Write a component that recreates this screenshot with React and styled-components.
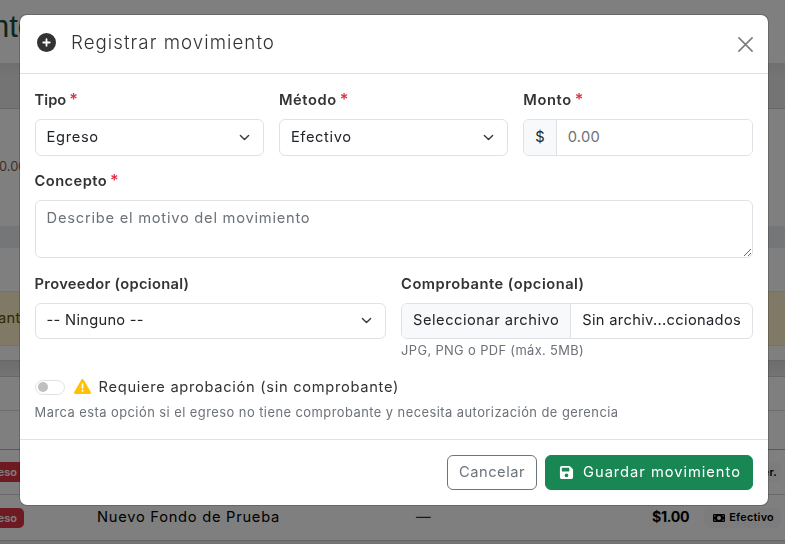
import React from 'react';
import styled, { createGlobalStyle } from 'styled-components';
import { FaCirclePlus, FaTriangleExclamation, FaFloppyDisk, FaMoneyBill } from 'react-icons/fa6';

const GlobalStyle = createGlobalStyle`
  * { box-sizing: border-box; }
  body {
    margin: 0;
    overflow: hidden;
    font-family: Inter, "Open Sans", sans-serif;
    font-size: 14.7px;
    font-weight: 370;
    line-height: 22.5px;
    color: #333;
  }
  input, select, textarea, button { font: inherit; color: inherit; }
`;

/* ---------- page behind the dialog ---------- */

const Page = styled.div`
  height: 544px;
  overflow: hidden;
  display: flex;
  flex-direction: column;
  background: #e8e8e8;
`;

const Band = styled.div`
  flex: none;
  display: flex;
  align-items: center;
  height: ${(p) => p.$height}px;
  background: ${(p) => p.$bg || '#fff'};
  border-bottom: ${(p) => (p.$line ? `1px solid ${p.$line}` : '0')};
  color: ${(p) => p.$color || '#333'};
  white-space: nowrap;
`;

const PageTitle = styled.div`
  margin: -10px 0 0 -8px;
  font: 31px/36px "Liberation Sans", Arial, sans-serif;
  color: #1b5034;
`;

const Amount = styled.div`
  margin: 0 0 0 -1px;
  font-size: 12.9px;
  color: #8a5a3c;
`;

const AlertText = styled.span`
  margin-left: -2px;
  letter-spacing: 0.3px;
  color: #664d03;
`;

const TypeCell = styled.div`
  width: 97px;
  margin-left: -26px;
  padding-right: 47px;
  display: flex;
  flex: none;
`;

const TypeBadge = styled.span`
  width: 50px;
  height: 20px;
  padding-right: 7px;
  border-radius: 5px;
  background: #dc3545;
  color: #fff;
  font-size: 11px;
  font-weight: 600;
  line-height: 20px;
  text-align: right;
`;

const ConceptCell = styled.div`
  width: 319px;
  margin-left: 26px;
  flex: none;
  letter-spacing: 0.73px;
  color: #000;
`;

const VoucherCell = styled.div`
  width: 236px;
  flex: none;
`;

const PriceCell = styled.div`
  width: 52px;
  flex: none;
  font-size: 14.2px;
  font-weight: 650;
  letter-spacing: -0.3px;
  color: #000;
`;

const MethodBadge = styled.span`
  display: inline-flex;
  align-items: center;
  justify-content: flex-end;
  gap: 4px;
  width: 77px;
  height: 20px;
  padding-right: ${(p) => (p.$wide ? 4 : 7)}px;
  border-radius: 5px;
  background: #f8f9fa;
  color: #000;
  font-size: 10.9px;
  font-weight: 600;
  letter-spacing: 0.25px;

  svg { width: 12px; height: 12px; }
`;

/* ---------- dialog ---------- */

const Backdrop = styled.div`
  position: fixed;
  inset: 0;
  display: flex;
  align-items: flex-start;
  padding: 14px 0 0 19px;
  background: rgba(0, 0, 0, 0.5);
`;

const Dialog = styled.section`
  width: 750px;
  height: 492px;
  display: flex;
  flex-direction: column;
  overflow: hidden;
  border: 1px solid rgba(0, 0, 0, 0.18);
  border-radius: 8px;
  background: #fff;
  background-clip: padding-box;
`;

const Header = styled.header`
  flex: none;
  height: 59px;
  display: flex;
  align-items: center;
  gap: 15px;
  padding: 0 15px 1px 17px;
  border-bottom: 1px solid #dee2e6;

  > svg { width: 19px; height: 19px; margin-top: -2px; }
`;

const Title = styled.h5`
  flex: 1;
  margin: -2px 0 0;
  font-size: 18.7px;
  font-weight: 360;
  line-height: 28px;
  letter-spacing: 1.05px;
`;

const CloseButton = styled.button`
  display: flex;
  margin-top: 2px;
  padding: 0;
  border: 0;
  background: none;
  color: #000;
  opacity: 0.5;
`;

const Body = styled.div`
  flex: 1;
  display: flex;
  flex-direction: column;
  padding: 15px 15.4px 0 14.6px;
`;

const Row = styled.div`
  display: grid;
  grid-template-columns: repeat(${(p) => p.$cols}, 1fr);
  gap: 15px;
  margin-bottom: 14.5px;
`;

const Field = styled.div`
  display: flex;
  flex-direction: column;
  min-width: 0;
`;

const Label = styled.label`
  margin-bottom: 7.5px;
  font-weight: 600;
  letter-spacing: ${(p) => p.$track}px;
  white-space: pre;
`;

const Required = styled.span`
  margin-left: 3px;
  font-size: 16px;
  line-height: 1;
  color: #dc3545;
`;

const SelectBox = styled.div`
  display: grid;
  align-items: center;

  > * { grid-area: 1 / 1; }
  > svg { justify-self: end; margin-right: 14px; pointer-events: none; }
`;

const Select = styled.select`
  appearance: none;
  width: 100%;
  height: 36.5px;
  padding: 0 34px 1px 11px;
  border: 1px solid #dee2e6;
  border-radius: 6px;
  background: #fff;
  color: #212529;
  letter-spacing: ${(p) => p.$track}px;
`;

const InputGroup = styled.div`
  display: flex;
  height: 36.5px;
  overflow: hidden;
  border: 1px solid #dee2e6;
  border-radius: 6px;
`;

const Addon = styled.span`
  flex: none;
  display: flex;
  align-items: center;
  padding: 0 11px 1px;
  border-right: 1px solid #dee2e6;
  background: #f8f9fa;
  color: #212529;
  letter-spacing: ${(p) => p.$track || 0}px;
`;

const AmountInput = styled.input`
  flex: 1;
  min-width: 0;
  padding: 0 11px 1px;
  border: 0;
  outline: 0;
  letter-spacing: 0.25px;

  &::placeholder { color: #6c7278; opacity: 1; }
`;

const FileName = styled.span`
  flex: 1;
  display: flex;
  align-items: center;
  padding: 0 11px 1px;
  letter-spacing: 0.32px;
  color: #212529;
  white-space: nowrap;
`;

const TextArea = styled.textarea`
  display: block;
  width: 100%;
  height: 58px;
  padding: 5.5px 11px;
  border: 1px solid #dee2e6;
  border-radius: 6px;
  background: #fff;
  letter-spacing: 0.75px;
  resize: vertical;

  &::placeholder { color: #6c7278; opacity: 1; }
`;

const Hint = styled.div`
  margin-top: ${(p) => p.$gap}px;
  font-size: 12.9px;
  line-height: 19.7px;
  letter-spacing: ${(p) => p.$track}px;
  color: #6c7278;
  white-space: nowrap;
`;

const SwitchRow = styled.label`
  display: flex;
  align-items: center;
  height: 22.5px;
  margin-top: 1.5px;
  letter-spacing: 0.69px;

  > svg { width: 17px; height: 17px; margin: -1px 8px 0 9px; color: #ffc107; }
`;

const Switch = styled.span`
  width: 30px;
  height: 15px;
  padding: 1.5px 2px;
  border: 1px solid #dee2e6;
  border-radius: 15px;

  &::before {
    content: '';
    display: block;
    width: 10px;
    height: 10px;
    border-radius: 50%;
    background: #bfbfbf;
  }
`;

const Footer = styled.footer`
  flex: none;
  height: 66px;
  display: flex;
  justify-content: flex-end;
  align-items: flex-start;
  gap: 8px;
  padding: 15px;
  border-top: 1px solid #dee2e6;
`;

const Button = styled.button`
  height: 35px;
  display: flex;
  align-items: center;
  justify-content: center;
  gap: 9px;
  width: ${(p) => (p.$primary ? 208 : 90)}px;
  padding: 0 0 1px;
  border: 1px solid ${(p) => (p.$primary ? '#198754' : '#6c757d')};
  border-radius: 6px;
  background: ${(p) => (p.$primary ? '#198754' : '#fff')};
  color: ${(p) => (p.$primary ? '#fff' : '#6c757d')};
  font-weight: ${(p) => (p.$primary ? 400 : 370)};
  letter-spacing: ${(p) => (p.$primary ? 0.97 : 0.53)}px;
  white-space: nowrap;

  svg { width: 15px; height: 15px; margin-left: 2px; }
`;

const Chevron = () => (
  <svg width="11" height="11" viewBox="0 0 16 16" fill="none">
    <path d="m2 5 6 6 6-6" stroke="#343a40" strokeWidth="2" strokeLinecap="round" strokeLinejoin="round" />
  </svg>
);

const Dropdown = ({ value, track }) => (
  <SelectBox>
    <Select $track={track} defaultValue={value}>
      <option>{value}</option>
    </Select>
    <Chevron />
  </SelectBox>
);

const Background = () => (
  <Page>
    <Band $height={63}><PageTitle>nto</PageTitle></Band>
    <Band $height={46} $bg="linear-gradient(#dedede, #e8e8e8 12px)" $line="#d0d0d0" />
    <Band $height={117}><Amount>0.00</Amount></Band>
    <Band $height={22} $bg="#e9ecef" />
    <Band $height={44} $line="#ffe69c" />
    <Band $height={54} $bg="#fff3cd" $line="#ffe69c"><AlertText>ant</AlertText></Band>
    <Band $height={15} $line="#cfcfcf" />
    <Band $height={16} $bg="linear-gradient(#dadada, #e8e8e8)" $line="#d0d0d0" />
    <Band $height={34} $line="#dcdcdc" />
    <Band $height={39} $line="#b4b4b4" />
    <Band $height={45} $line="#d4d4d4">
      <TypeCell><TypeBadge>eso</TypeBadge></TypeCell>
      <ConceptCell />
      <VoucherCell />
      <PriceCell />
      <MethodBadge $wide>er.</MethodBadge>
    </Band>
    <Band $height={46} $line="#c8c8c8">
      <TypeCell><TypeBadge>eso</TypeBadge></TypeCell>
      <ConceptCell>Nuevo Fondo de Prueba</ConceptCell>
      <VoucherCell>—</VoucherCell>
      <PriceCell>$1.00</PriceCell>
      <MethodBadge><FaMoneyBill />Efectivo</MethodBadge>
    </Band>
  </Page>
);

export default function App() {
  return (
    <>
      <GlobalStyle />
      <Background />
      <Backdrop>
        <Dialog role="dialog">
          <Header>
            <FaCirclePlus />
            <Title>Registrar movimiento</Title>
            <CloseButton aria-label="Cerrar">
              <svg width="15" height="15" viewBox="0 0 16 16" fill="none">
                <path d="M1 1l14 14M15 1L1 15" stroke="currentColor" strokeWidth="1.8" strokeLinecap="round" />
              </svg>
            </CloseButton>
          </Header>

          <Body>
            <Row $cols={3}>
              <Field>
                <Label $track={0}>Tipo<Required>*</Required></Label>
                <Dropdown value="Egreso" track={0.66} />
              </Field>
              <Field>
                <Label $track={0.6}>Método<Required>*</Required></Label>
                <Dropdown value="Efectivo" track={0.6} />
              </Field>
              <Field>
                <Label $track={0.6}>Monto<Required>*</Required></Label>
                <InputGroup>
                  <Addon>$</Addon>
                  <AmountInput placeholder="0.00" />
                </InputGroup>
              </Field>
            </Row>

            <Row $cols={1}>
              <Field>
                <Label $track={0.42}>Concepto<Required>*</Required></Label>
                <TextArea placeholder="Describe el motivo del movimiento" />
              </Field>
            </Row>

            <Row $cols={2}>
              <Field>
                <Label $track={0.3}>Proveedor (opcional)</Label>
                <Dropdown value="-- Ninguno --" track={0.27} />
              </Field>
              <Field>
                <Label $track={0.5}>Comprobante (opcional)</Label>
                <InputGroup>
                  <Addon $track={0.49}>Seleccionar archivo</Addon>
                  <FileName>Sin archiv...ccionados</FileName>
                </InputGroup>
                <Hint $gap={1.5} $track={0.36}>JPG, PNG o PDF (máx. 5MB)</Hint>
              </Field>
            </Row>

            <SwitchRow>
              <Switch />
              <FaTriangleExclamation />
              Requiere aprobación (sin comprobante)
            </SwitchRow>
            <Hint $gap={4} $track={0.46}>
              Marca esta opción si el egreso no tiene comprobante y necesita autorización de gerencia
            </Hint>
          </Body>

          <Footer>
            <Button>Cancelar</Button>
            <Button $primary><FaFloppyDisk />Guardar movimiento</Button>
          </Footer>
        </Dialog>
      </Backdrop>
    </>
  );
}
